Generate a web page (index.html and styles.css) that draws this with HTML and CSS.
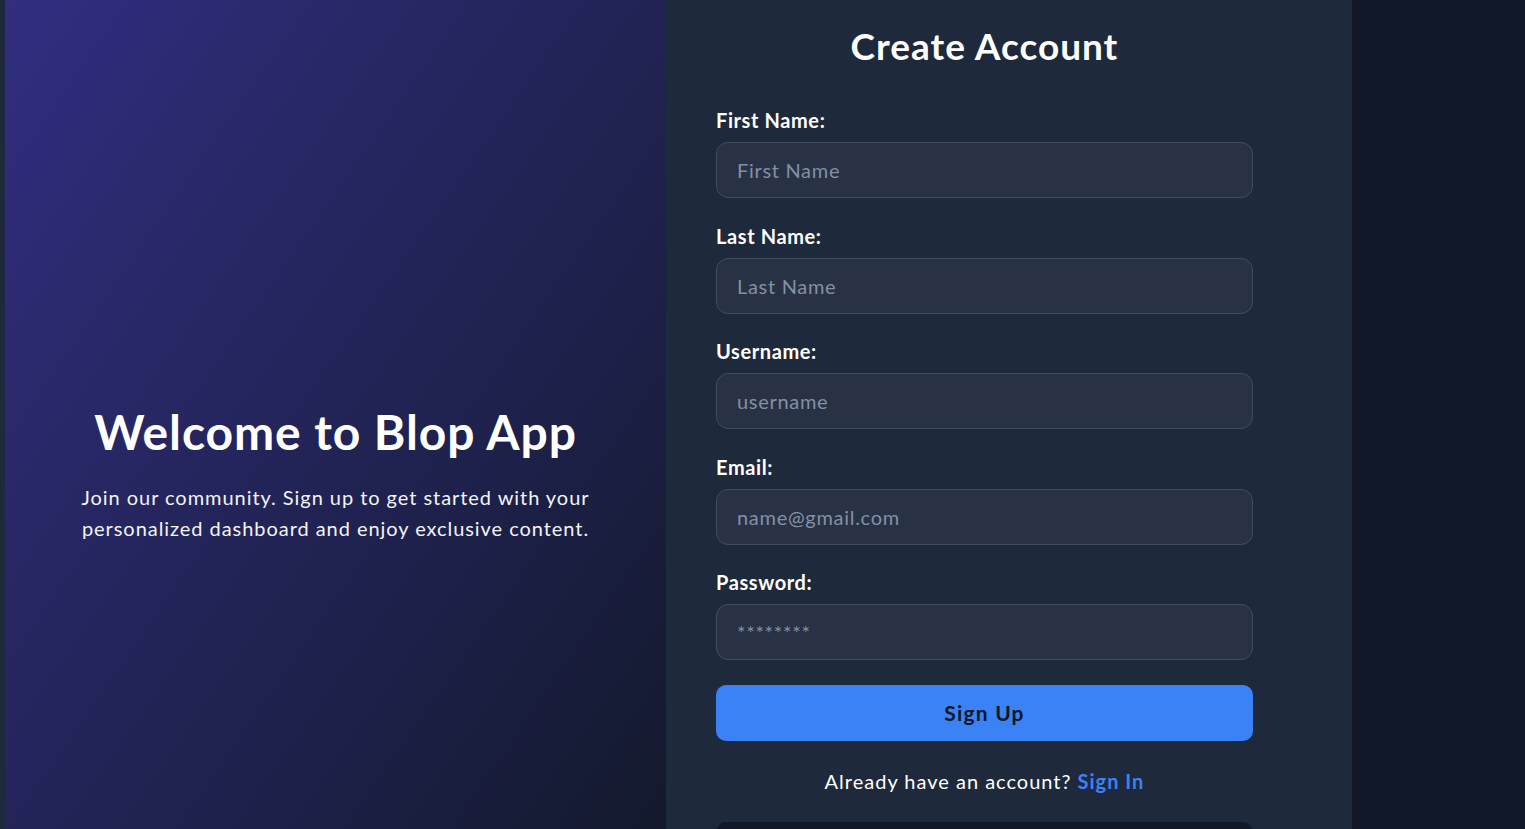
FILE: index.html
```html
<!DOCTYPE html>
<html lang="en">
<head>
    <meta charset="UTF-8">
    <meta name="viewport" content="width=device-width, initial-scale=1.0">
    <title>Blop App - Sign Up</title>
    <link rel="stylesheet" href="styles.css">
</head>
<body>
    <div class="layout">
        <!-- Left: welcome panel -->
        <div class="hero">
            <div class="hero-content">
                <h1>Welcome to Blop App</h1>
                <p>Join our community. Sign up to get started with your personalized dashboard and enjoy exclusive content.</p>
            </div>
        </div>
        <!-- Right: sign up form -->
        <div class="form-panel">
            <h2>Create Account</h2>
            <form class="signup-form" onsubmit="return false;">
                <div class="field">
                    <label for="firstName">First Name:</label>
                    <input type="text" id="firstName" placeholder="First Name">
                </div>
                <div class="field">
                    <label for="lastName">Last Name:</label>
                    <input type="text" id="lastName" placeholder="Last Name">
                </div>
                <div class="field">
                    <label for="username">Username:</label>
                    <input type="text" id="username" placeholder="username">
                </div>
                <div class="field">
                    <label for="email">Email:</label>
                    <input type="email" id="email" placeholder="name@gmail.com">
                </div>
                <div class="field">
                    <label for="password">Password:</label>
                    <input type="password" id="password" placeholder="********">
                </div>
                <button type="submit" class="signup-button">Sign Up</button>
            </form>
            <p class="signin-text">Already have an account? <a href="#">Sign In</a></p>
            <!-- social sign up, below the fold -->
            <button type="button" class="google-button" aria-label="Continue with Google"></button>
        </div>
    </div>
</body>
</html>
```

FILE: styles.css
```css
html, body {
    overflow: hidden;
}
body {
    font-family: Lato, "Open Sans", sans-serif;
    margin: 0;
    padding: 0;
    background-color: #111827;
    color: #fff;
}
.layout {
    display: flex;
    width: 1347px;
    border-left: 5px solid #1e293b;
}
.hero {
    width: 661px;
    display: flex;
    align-items: center;
    justify-content: center;
    background: linear-gradient(to bottom right, #312e81, #111827);
}
.hero-content {
    text-align: center;
    padding: 0 40px;
}
.hero h1 {
    font-size: 48px;
    font-weight: bold;
    line-height: 58px;
    letter-spacing: 0.9px;
    margin: 0 0 21px;
}
.hero p {
    font-size: 20px;
    line-height: 31px;
    letter-spacing: 0.95px;
    margin: 0;
    color: #f3f4f6;
}
.form-panel {
    width: 537px;
    padding: 22px 99px 69px 50px;
    background-color: #1e293b;
}
.form-panel h2 {
    text-align: center;
    font-size: 37px;
    line-height: 48px;
    letter-spacing: 1px;
    margin: 0 0 36px;
}
.signup-form {
    display: flex;
    flex-direction: column;
    gap: 23.5px;
}
.field {
    display: flex;
    flex-direction: column;
    gap: 8px;
}
.field label {
    font-size: 20px;
    line-height: 28px;
    font-weight: bold;
    letter-spacing: 0.6px;
}
.field input {
    height: 56px;
    box-sizing: border-box;
    padding: 0 20px;
    background-color: #293244;
    border: 1px solid #414c5e;
    border-radius: 12px;
    color: #fff;
    font-family: inherit;
    font-size: 20px;
    letter-spacing: 0.7px;
    outline: none;
}
.field input::placeholder {
    color: #8290a6;
}
.signup-button {
    height: 56px;
    margin-top: 1px;
    background-color: #3b82f6;
    color: #111827;
    border: none;
    border-radius: 10px;
    font-family: inherit;
    font-size: 21px;
    font-weight: bold;
    letter-spacing: 1.2px;
    cursor: pointer;
}
.signin-text {
    text-align: center;
    font-size: 20px;
    line-height: 28px;
    letter-spacing: 1px;
    margin: 26px 0 27px;
}
.signin-text a {
    color: #3b82f6;
    font-weight: bold;
    text-decoration: none;
}
.google-button {
    display: block;
    width: 100%;
    height: 56px;
    background-color: #111827;
    border: none;
    border-radius: 10px;
}
```
